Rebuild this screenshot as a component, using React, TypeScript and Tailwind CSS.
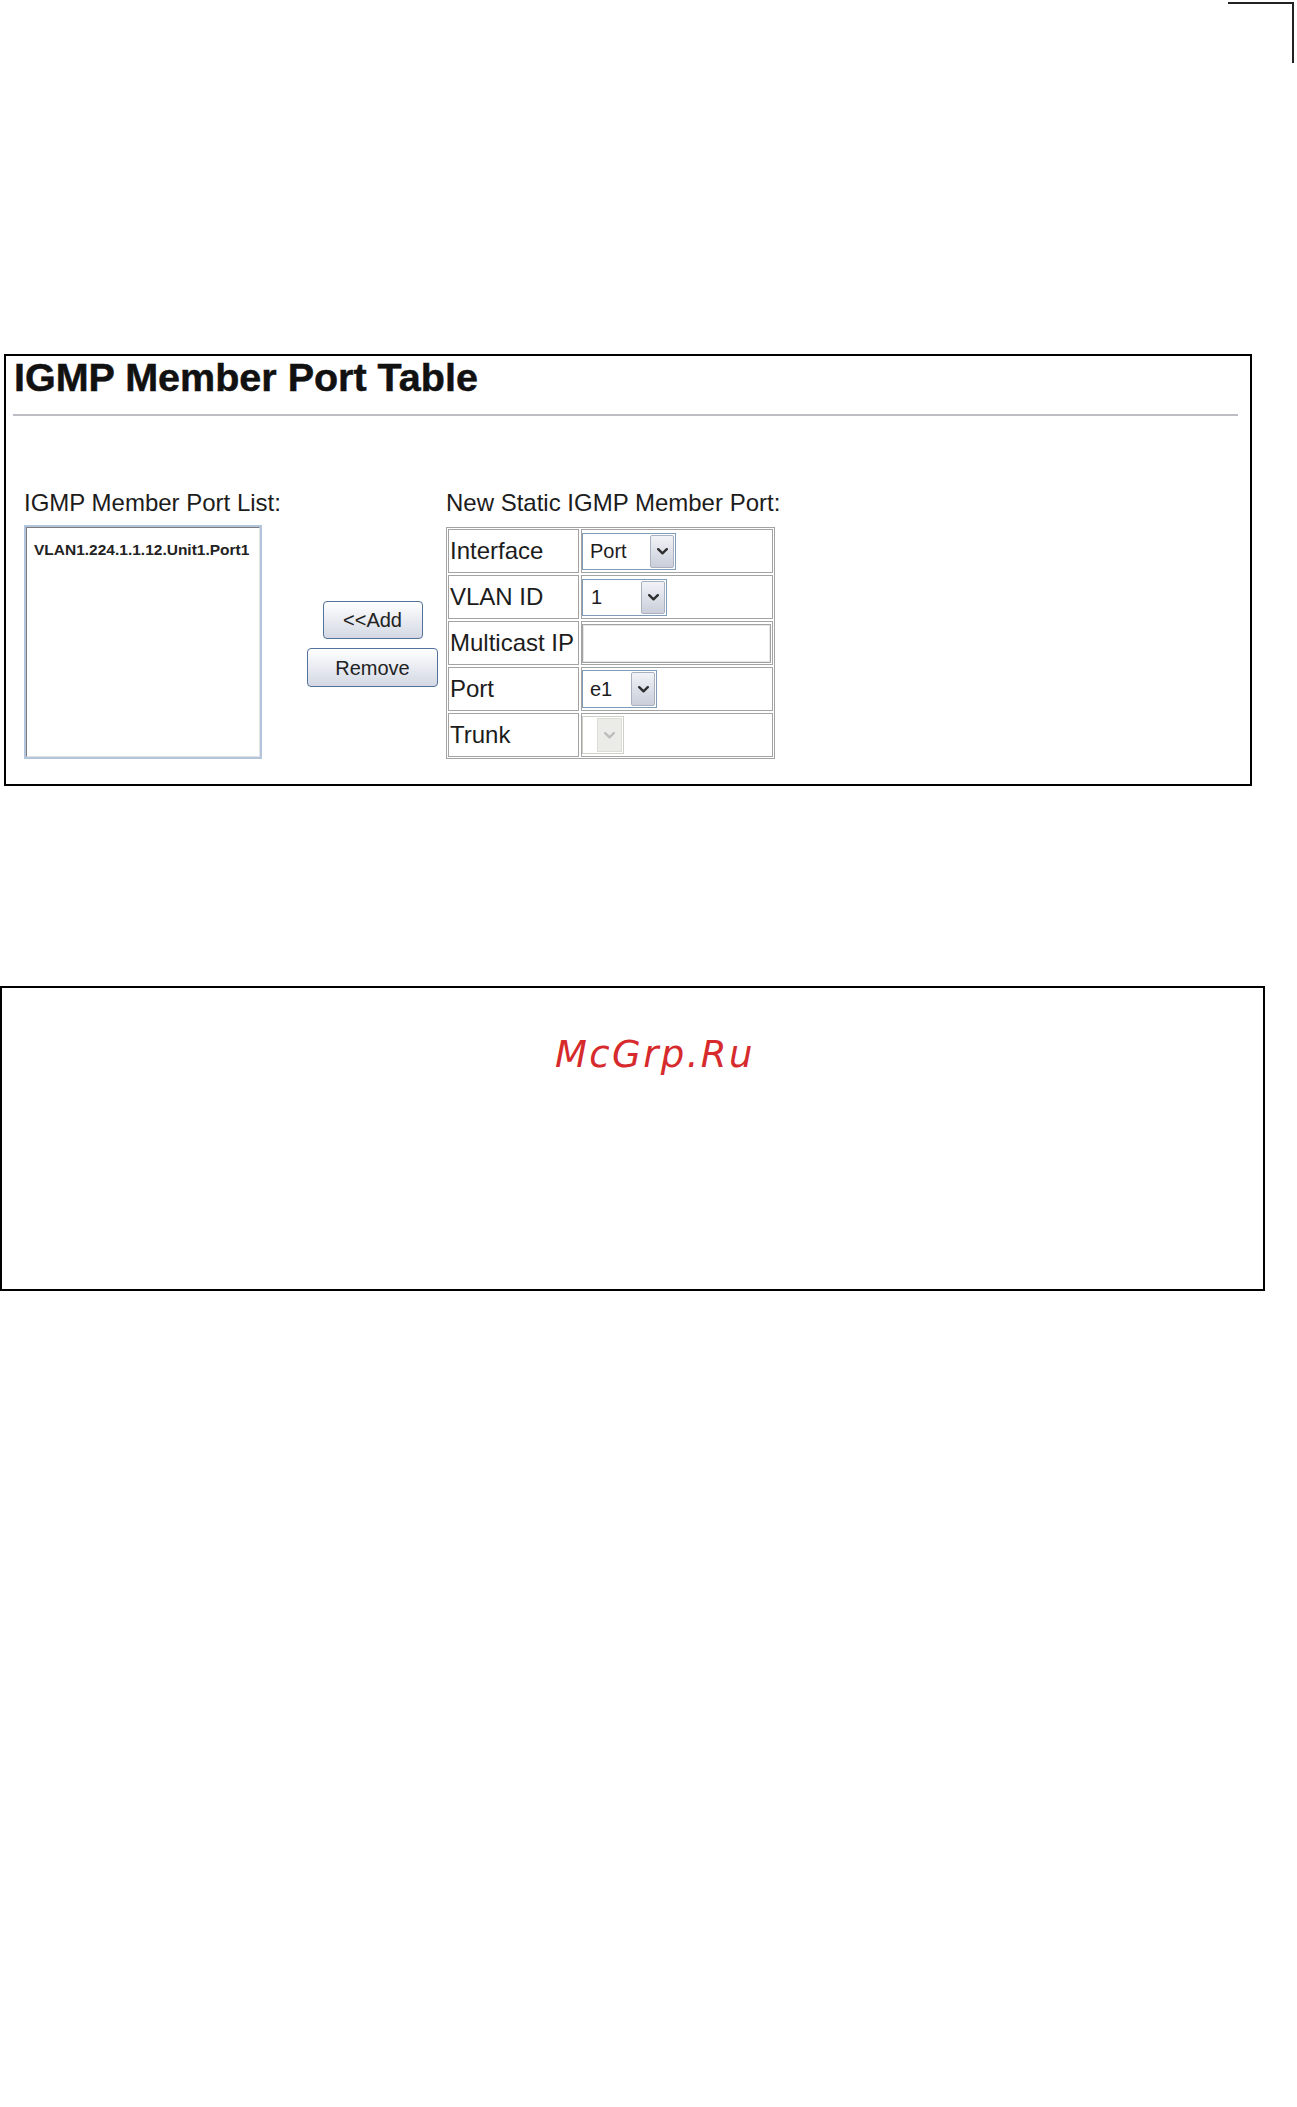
import React from "react";

function Chevron({ color = "#2f2f2f" }: { color?: string }) {
  return (
    <svg width="11" height="7" viewBox="0 0 11 7">
      <path d="M1.2 1.2 L5.5 5.3 L9.8 1.2" stroke={color} strokeWidth="2.4" fill="none" strokeLinecap="round" strokeLinejoin="round" />
    </svg>
  );
}

function SelBtn() {
  return (
    <span className="flex w-[24px] items-center justify-center rounded-[2px] border border-[#a9b1c1] bg-linear-to-b from-[#f1f3f7] to-[#c9ceda]">
      <Chevron />
    </span>
  );
}

export default function App() {
  const label = "flex h-[44px] items-center border border-[#a3a3a3] pl-[1px] text-[24px] leading-[24px] text-[#1c1c1c]";
  const value = "flex h-[44px] items-center border border-[#a3a3a3]";
  return (
    <div className="min-h-[2107px] w-[1297px] bg-white font-['Liberation_Sans',Arial,sans-serif] text-[#1c1c1c]">
      <div className="flex justify-end pr-[3px] pt-[2px]">
        <div className="h-[61px] w-[66px] border-r-2 border-t-2 border-[#222]" />
      </div>

      <div className="ml-[4px] mt-[291px] h-[432px] w-[1248px] border-2 border-black">
        <h1 className="ml-[8px] mt-[1px] text-[39.5px] font-bold leading-[40px] text-[#111] [-webkit-text-stroke:0.5px_#111]">IGMP Member Port Table</h1>
        <div className="ml-[7px] mt-[17px] h-[2px] w-[1225px] bg-[#bdbdc5]" />

        <div className="mt-[75px] flex items-start">
          <div className="ml-[18px] flex w-[238px] shrink-0 flex-col">
            <div className="whitespace-nowrap text-[24px] leading-[24px]">IGMP Member Port List:</div>
            <div className="mt-[10px] h-[234px] w-[238px] border-2 border-[#b3c5dc]">
              <div className="h-full border border-b-[#e2e2e2] border-l-[#7c7c7c] border-r-[#e2e2e2] border-t-[#7c7c7c] bg-white pl-[7px] pt-[13px]">
                <div className="whitespace-nowrap text-[15.5px] font-bold leading-[18px] text-[#222]">VLAN1.224.1.1.12.Unit1.Port1</div>
              </div>
            </div>
          </div>

          <div className="ml-[45px] mt-[110px] flex w-[131px] shrink-0 flex-col items-center">
            <button className="flex h-[38px] w-[100px] items-center justify-center rounded-[4px] border border-[#52719b] bg-linear-to-b from-white to-[#d3d8e3] text-[20px] leading-[20px] text-[#222]">
              &lt;&lt;Add
            </button>
            <button className="mt-[9px] flex h-[39px] w-[131px] items-center justify-center rounded-[4px] border border-[#52719b] bg-linear-to-b from-white to-[#d3d8e3] text-[20px] leading-[20px] text-[#222]">
              Remove
            </button>
          </div>

          <div className="ml-[8px] flex flex-col">
            <div className="whitespace-nowrap text-[24px] leading-[24px]">New Static IGMP Member Port:</div>
            <div className="mt-[12px] w-[329px] border border-[#a3a3a3] p-[1px]">
              <div className="grid grid-cols-[131px_192px] gap-[2px]">
                <div className={label}>Interface</div>
                <div className={value}>
                  <div className="flex h-[37px] w-[94px] border border-[#7f9db9] bg-white p-[1px]">
                    <span className="flex-1 pl-[6px] text-[20px] leading-[33px]">Port</span>
                    <SelBtn />
                  </div>
                </div>

                <div className={label}>VLAN ID</div>
                <div className={value}>
                  <div className="flex h-[37px] w-[85px] border border-[#7f9db9] bg-white p-[1px]">
                    <span className="flex-1 pl-[7px] text-[20px] leading-[33px]">1</span>
                    <SelBtn />
                  </div>
                </div>

                <div className={label}>Multicast IP</div>
                <div className={value}>
                  <div className="h-[39px] w-[189px] border border-[#a2a2a2] bg-white shadow-[inset_0_0_0_1px_#e6e6e6]" />
                </div>

                <div className={label}>Port</div>
                <div className={value}>
                  <div className="flex h-[38px] w-[75px] border border-[#7f9db9] bg-white p-[1px]">
                    <span className="flex-1 pl-[6px] text-[20px] leading-[34px]">e1</span>
                    <SelBtn />
                  </div>
                </div>

                <div className={label}>Trunk</div>
                <div className={value}>
                  <div className="flex h-[38px] w-[42px] border border-[#cfcfc8] bg-white p-[1px]">
                    <span className="w-[13px]" />
                    <span className="flex flex-1 items-center justify-center border border-[#dcdcd6] bg-[#ebebe7]">
                      <Chevron color="#bdbdbd" />
                    </span>
                  </div>
                </div>
              </div>
            </div>
          </div>
        </div>
      </div>

      <div className="mt-[200px] h-[305px] w-[1265px] border-2 border-black pl-[553px] pt-[48px]">
        <div className="font-['DejaVu_Sans',sans-serif] text-[37px] italic leading-[37px] tracking-[2.4px] text-[#d62a2c]">McGrp.Ru</div>
      </div>
    </div>
  );
}
